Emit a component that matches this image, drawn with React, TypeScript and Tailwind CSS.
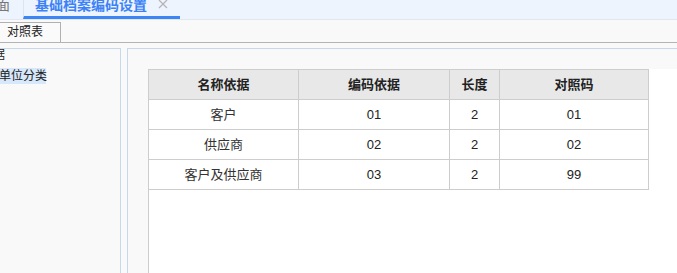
import React from 'react'

const rows = [
  { name: '客户', basis: '01', len: '2', code: '01' },
  { name: '供应商', basis: '02', len: '2', code: '02' },
  { name: '客户及供应商', basis: '03', len: '2', code: '99' },
]

const cell = 'h-[30px] flex items-center justify-center border-r border-b border-[#cdcdcd]'

export default function App() {
  return (
    <div className="w-[677px] h-[273px] overflow-hidden bg-[#f9f9f9] flex flex-col font-['Liberation_Sans','Noto_Sans_CJK_SC',sans-serif] text-[12px] text-[#222]">
      {/* Top tab bar */}
      <div className="h-[20px] shrink-0 flex bg-[#eef4fe] border-b border-[#e2e7ee]">
        <div className="w-[23px] h-[19px] overflow-hidden flex justify-end pr-[13px]">
          <span className="whitespace-nowrap text-[14px] leading-[14px] -mt-[2px] text-[#777]">界面</span>
        </div>
        <div className="w-[157px] h-[19px] flex items-start border-l border-[#dde4ee] border-b-[3px] border-b-[#3b85f7] pl-[11px]">
          <span className="whitespace-nowrap text-[14px] leading-[14px] -mt-[2px] font-bold text-[#3b82f6]">基础档案编码设置</span>
          <span className="ml-[11px] -mt-[1px] text-[#b5b5b5]">
            <svg width="10" height="10" viewBox="0 0 10 10">
              <path d="M1 1 L9 9 M9 1 L1 9" stroke="currentColor" strokeWidth="1.3" fill="none" />
            </svg>
          </span>
        </div>
      </div>

      {/* Sub tab strip */}
      <div className="h-[23px] shrink-0 pt-[2px] flex border-b border-[#b4b4b4]">
        <div className="w-[61px] h-[20px] border-t border-r border-[#b0b0b0] bg-[#fafafa] pl-[7px] leading-[19px] text-[12px] text-[#222]">
          对照表
        </div>
      </div>

      {/* Panels */}
      <div className="mt-[5px] flex gap-[6px] flex-1 min-h-0">
        {/* Left tree */}
        <div className="w-[121px] shrink-0 border-t border-r border-[#c5d9ea] overflow-hidden">
          <div className="-ml-[43px] -mt-[2px] h-[16px] leading-[16px] whitespace-nowrap">档案依据</div>
          <div className="mt-[5px] w-[46px] h-[16px] leading-[16px] bg-[#d7e8fa] whitespace-nowrap -indent-[1px]">
            单位分类
          </div>
        </div>

        {/* Right content */}
        <div className="flex-1 border-t border-l border-[#c5d9ea] pl-[20px] pt-[20px] flex flex-col min-w-0">
          <div className="flex-1 bg-white border-l border-[#cdcdcd]">
            <div className="grid grid-cols-[150px_151px_50px_149px] border-t border-[#cdcdcd] w-max text-[13px]">
              {['名称依据', '编码依据', '长度', '对照码'].map((h) => (
                <div key={h} className={`${cell} bg-[#e8e8e8] font-bold text-[#222]`}>
                  {h}
                </div>
              ))}
              {rows.map((r) => (
                <React.Fragment key={r.name}>
                  <div className={`${cell} text-[#333]`}>{r.name}</div>
                  <div className={`${cell} text-[#222]`}>{r.basis}</div>
                  <div className={`${cell} text-[#222]`}>{r.len}</div>
                  <div className={`${cell} text-[#222]`}>{r.code}</div>
                </React.Fragment>
              ))}
            </div>
          </div>
        </div>
      </div>
    </div>
  )
}
